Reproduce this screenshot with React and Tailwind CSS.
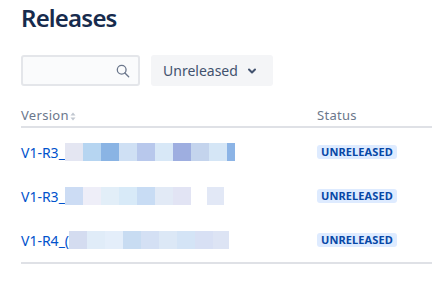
import React from 'react';

// Pixelated redaction blocks: [color, width]
const rows = [
    {
        id: 1,
        prefix: 'V1-R3_',
        blocks: [
            ['#e4e6f2', 18], ['#b6d5f1', 18], ['#8ab4e4', 18], ['#cfe0f4', 18], ['#b8c8ec', 18],
            ['#d8e8f7', 18], ['#9eaee0', 18], ['#c4d4ed', 18], ['#d5e6f6', 18], ['#8cb4e6', 8],
        ],
    },
    {
        id: 2,
        prefix: 'V1-R3_',
        blocks: [
            ['#ccdcf4', 18], ['#eeeef8', 18], ['#e2eef8', 18], ['#d8eaf8', 18], ['#c8dcf4', 18],
            ['#e2eaf6', 18], ['#e2e4f4', 18], ['#ffffff', 16], ['#e2e8f6', 17],
        ],
    },
    {
        id: 3,
        prefix: 'V1-R4_(',
        blocks: [
            ['#d4dcf0', 18], ['#e0ecf8', 18], ['#e4eefa', 18], ['#c8dcf2', 18], ['#d4e0f4', 18],
            ['#dce8f6', 18], ['#d4e4f6', 18], ['#d8e0f4', 18], ['#dde4f4', 16],
        ],
    },
];

const Releases = () => {
    return (
        <div className="w-[432px] h-[284px] overflow-hidden bg-white font-['Noto_Sans',sans-serif]">
            <div className="pl-[21px] pt-[2px]">
                {/* Header */}
                <h1 className="text-[24px] leading-[32px] font-semibold text-[#172b4d] tracking-[-0.8px]">Releases</h1>

                {/* Filters */}
                <div className="flex items-center gap-[11px] mt-[21px]">
                    <div className="w-[119px] h-[31px] border-2 border-[#e4e6ea] bg-[#fafbfc] rounded-[3px] flex items-center justify-end pr-[8px]">
                        <svg width="14" height="14" viewBox="0 0 16 16" fill="none" stroke="#6b778c" strokeWidth="1.5">
                            <circle cx="6.5" cy="6.5" r="5" />
                            <path d="M10.2 10.2L14.5 14.5" strokeLinecap="round" />
                        </svg>
                    </div>
                    <button className="h-[31px] w-[122px] bg-[#f4f5f7] rounded-[3px] flex items-center pl-[12px] gap-[8px] text-[14px] text-[#42526e]">
                        <span>Unreleased</span>
                        <svg width="12" height="12" viewBox="0 0 12 12" fill="none" stroke="#42526e" strokeWidth="2">
                            <path d="M3 4.5L6 7.5L9 4.5" strokeLinecap="round" strokeLinejoin="round" />
                        </svg>
                    </button>
                </div>

                {/* Table */}
                <div className="mt-[20px] w-[420px]">
                    <div className="flex items-center h-[22px] border-b-2 border-[#dfe1e6] text-[13px] text-[#6b778c]">
                        <div className="w-[296px] flex items-center gap-[1px]">
                            <span className="tracking-[0.3px]">Version</span>
                            <svg width="6" height="9" viewBox="0 0 6 9" fill="#c1c7d0">
                                <path d="M3 0.5L5.5 3.5H0.5Z" />
                                <path d="M3 8.5L5.5 5.5H0.5Z" />
                            </svg>
                        </div>
                        <div className="tracking-[0.3px]">Status</div>
                    </div>

                    <div className="border-b-2 border-[#dfe1e6] pt-[2px]">
                        {rows.map((row) => (
                            <div key={row.id} className="flex items-center h-[44px]">
                                <div className="w-[296px] flex items-center">
                                    <span className="text-[14px] text-[#0052cc]">{row.prefix}</span>
                                    <div className="flex items-start h-[18px]">
                                        {row.blocks.map((b, i) => (
                                            <span key={i} className="h-[18px] shrink-0" style={{ backgroundColor: b[0], width: b[1] }} />
                                        ))}
                                    </div>
                                </div>
                                <span className="bg-[#deebff] text-[#0747a6] text-[11px] font-bold leading-[14px] px-[4px] rounded-[3px] tracking-[0.1px]">
                                    UNRELEASED
                                </span>
                            </div>
                        ))}
                    </div>
                </div>
            </div>
        </div>
    );
};

export default function App() {
    return <Releases />;
}
